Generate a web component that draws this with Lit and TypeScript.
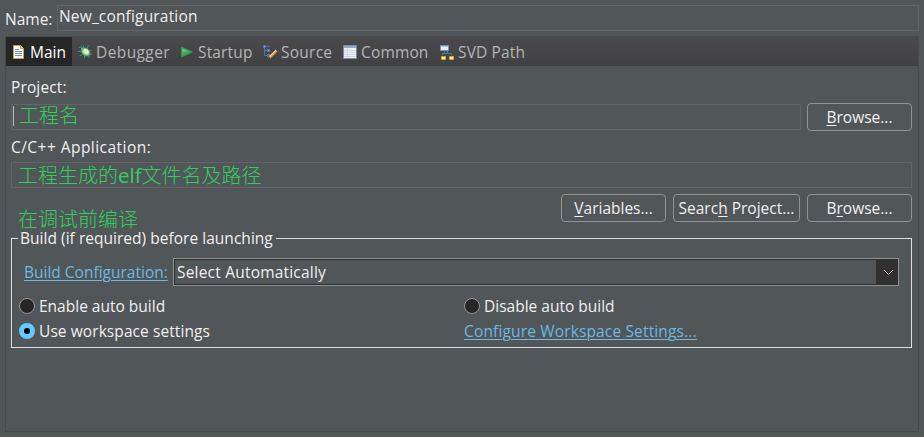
import { LitElement, html, svg, css } from "lit";
import { customElement } from "lit/decorators.js";
import { classMap } from "lit/directives/class-map.js";

const icons = {
  main: svg`<path d="M1.500 1.500h7l3 3v10h-10z" fill="#f4f7fc" stroke="#c9a545"/><path d="M8.500 1.500v3h3" fill="#e8cf82" stroke="#c9a545"/><path d="M3 5.500h4M3 7.500h7M3 9.500h7M3 11.500h7" stroke="#7090c4"/>`,
  debugger: svg`<path d="M1 3.500h2l2 2M5.500 1v3M0 7.500h3M1.500 11.500h2l2-2M6.500 14v-3M11 14v-3M11.500 10.500h2.500M11 6.500h2.500M9.500 4.500V2h2M2.500 1.500l2.500 3" stroke="#2f9482"/><ellipse cx="7.700" cy="7.900" rx="4.800" ry="3.700" transform="rotate(40 7.700 7.900)" fill="#96cb7c" stroke="#3d8a68" stroke-width=".8"/><ellipse cx="8" cy="7.500" rx="3" ry="2.200" transform="rotate(40 8 7.500)" fill="#e0f3c2"/><circle cx="4.400" cy="5" r="1.300" fill="#5fb8a0"/>`,
  startup: svg`<path d="M1.500 3l11 5-11 5z" fill="#42a95c" stroke="#319354"/><path d="M2 4.500l7 3H2z" fill="#66c27a"/>`,
  source: svg`<path d="M2.500 3v8.500h4M2.500 6.500h4M4 2.500h4" stroke="#5076b5" fill="none"/><path d="M1 1h3v3H1zM5 5h3v3H5zM5 10h3v3H5z" fill="#5076b5"/><path d="M2 2h1v1H2zM6 6h1v1H6z" fill="#9bb5e2"/><path d="M14.500 6.500L7.500 13.500" stroke="#e8a54f" stroke-width="2.600"/><path d="M14 6L8 12" stroke="#ffd69a"/><path d="M5.500 15l1-2.500 1.800 1.500z" fill="#73513f"/>`,
  common: svg`<path d="M.5 1.500h13v13H.5z" fill="#eef0f7" stroke="#7b8ba9"/><path d="M1 2h12v2H1z" fill="#98a6c4"/><path d="M1 6.500h12M1 8.500h12M1 10.500h12M1 12.500h12M4.500 4v10" stroke="#d3d7e4"/>`,
  svd: svg`<path d="M4.500 6v3M2.500 11V9.500h9V11M7.500 6v3" stroke="#5576ad" fill="none"/><path d="M.5 1.500h8v5h-8z" fill="#eaf1ff" stroke="#6e91ce"/><path d="M1 2h7v1H1z" fill="#a9c8f7"/><path d="M1.500 12.500h4v3h-4zM9.500 12.500h4v3h-4z" fill="#fff2a1" stroke="#c9a927"/>`,
};

const tabs = [
  { id: "main", label: "Main" },
  { id: "debugger", label: "Debugger" },
  { id: "startup", label: "Startup" },
  { id: "source", label: "Source" },
  { id: "common", label: "Common" },
  { id: "svd", label: "SVD Path" },
] as const;

@customElement("app-root")
export class AppRoot extends LitElement {
  static styles = css`
    :host { display: block; height: 437px; box-sizing: border-box; overflow: hidden;
      background: #515658; color: #f0f0f0; padding: 5px 5px 0;
      font: 15.5px/22px "Open Sans", "Noto Sans CJK SC", sans-serif; }
    * { box-sizing: border-box; }
    .name { display: flex; height: 26px; }
    .name-label { width: 52px; padding-top: 3px; white-space: nowrap; }
    .field { height: 26px; border: 1px solid #646464; white-space: nowrap; }
    .name .field { width: 862px; padding-left: 1px; line-height: 20px; letter-spacing: .17px; }
    .folder { width: 914px; height: 396px; margin-top: 5px; border: 1px solid #474b4d; }
    .tabs { display: flex; height: 29px; background: linear-gradient(#4a4a4d, #414144); color: #b5b5b5; }
    .tab { display: flex; align-items: center; padding-left: 6px; gap: 2px; white-space: nowrap; }
    .tab svg { width: 16px; height: 16px; flex: none; }
    .tab.active { background: #262626; color: #fff; }
    .t-main { width: 66px; }
    .t-debugger { width: 102px; letter-spacing: .4px; }
    .t-startup { width: 82px; letter-spacing: .15px; }
    .t-source { width: 81px; letter-spacing: .25px; }
    .t-source span { margin-left: 1px; }
    .t-common { width: 97px; letter-spacing: .15px; }
    .t-svd { letter-spacing: .15px; }
    .body { padding: 10px 6px 0 5px; }
    .label { height: 22px; letter-spacing: .12px; }
    .row { display: flex; justify-content: space-between; align-items: center; height: 28px; margin-top: 5px; }
    .row .field { width: 790px; }
    .note { color: #30d05e; font: 20px/24px "Noto Sans CJK SC", sans-serif; font-weight: 300; white-space: nowrap; }
    .note .latin { font: 500 20.5px/22px "Open Sans", sans-serif; }
    .field .note { display: inline-block; padding-left: 5px; line-height: 20px; vertical-align: top; }
    .caret { display: inline-block; width: 1px; height: 20px; margin: 1px 0 0 1px; background: #bbb; vertical-align: top; }
    .label.app-label { margin-top: 5px; letter-spacing: .46px; }
    .app { margin-top: 4px; }
    .app .note { padding-left: 6px; line-height: 24px; }
    .actions { display: flex; justify-content: flex-end; gap: 7px; margin-top: 6px; }
    .btn { width: 105px; height: 28px; border: 1px solid #929292; border-radius: 4px; text-align: center;
      line-height: 27px; white-space: nowrap; }
    .btn.wide { width: 127px; }
    .u { text-decoration: underline; text-underline-offset: 2px; }
    .annotation { height: 16px; margin: -15px 0 0 7px; width: 130px; }
    .group { height: 110px; border: 1px solid #dedede; margin-top: 15px; }
    .legend { display: block; width: 258px; height: 22px; margin: -12px 0 0 6px; padding-left: 2px;
      letter-spacing: .03px; white-space: nowrap; background: linear-gradient(#515658, #515658) 0 8px / 100% 6px no-repeat; }
    .config { display: flex; margin-top: 9px; padding-left: 12px; }
    .link { color: #6cb9e2; text-decoration: underline; text-underline-offset: 2px; text-decoration-thickness: 1px; white-space: nowrap; }
    .config .link { width: 149px; padding-top: 3px; }
    .combo { display: flex; justify-content: space-between; width: 726px; height: 28px; border: 1px solid #929292;
      outline: 1px solid #303030; outline-offset: -2px; padding-left: 3px; line-height: 27px; letter-spacing: .2px; }
    .arrow { display: flex; align-items: center; justify-content: center; width: 22px; background: #303030; }
    .arrow svg { width: 11px; height: 7px; margin-left: 2px; }
    .options { display: grid; grid-template-columns: 445px 1fr; row-gap: 3px; margin: 9px 0 0 7px; }
    .option { display: flex; align-items: center; gap: 4px; height: 22px; white-space: nowrap; }
    .option.looser { letter-spacing: .08px; }
    .option .link { letter-spacing: .15px; }
    .radio { width: 16px; height: 16px; border: 1px solid #969696; border-radius: 50%; background: #262626; }
    .radio.on { border: 5px solid #60ccff; background: #000; }
  `;

  render() {
    return html`
      <div class="name"><span class="name-label">Name:</span><div class="field">New_configuration</div></div>
      <div class="folder">
        <div class="tabs">
          ${tabs.map((t, i) => html`<div class=${classMap({ tab: true, active: i === 0, ["t-" + t.id]: true })}>
            <svg viewBox="0 0 16 16" fill="none">${icons[t.id]}</svg><span>${t.label}</span></div>`)}
        </div>
        <div class="body">
          <div class="label">Project:</div>
          <div class="row">
            <div class="field"><span class="caret"></span><span class="note">工程名</span></div>
            <div class="btn"><span class="u">B</span>rowse...</div>
          </div>
          <div class="label app-label">C/C++ Application:</div>
          <div class="field app"><span class="note">工程生成的<span class="latin">elf</span>文件名及路径</span></div>
          <div class="actions">
            <div class="btn"><span class="u">V</span>ariables...</div>
            <div class="btn wide">Searc<span class="u">h</span> Project...</div>
            <div class="btn">B<span class="u">r</span>owse...</div>
          </div>
          <div class="note annotation">在调试前编译</div>
          <div class="group">
            <span class="legend">Build (if required) before launching</span>
            <div class="config">
              <span class="link">Build Configuration:</span>
              <div class="combo"><span>Select Automatically</span>
                <span class="arrow"><svg viewBox="0 0 11 7" fill="none"><path d="M1 1l4.500 4.500L10 1" stroke="#ccc"/></svg></span></div>
            </div>
            <div class="options">
              <div class="option"><span class="radio"></span>Enable auto build</div>
              <div class="option"><span class="radio"></span>Disable auto build</div>
              <div class="option looser"><span class="radio on"></span>Use workspace settings</div>
              <div class="option"><span class="link">Configure Workspace Settings...</span></div>
            </div>
          </div>
        </div>
      </div>`;
  }
}
